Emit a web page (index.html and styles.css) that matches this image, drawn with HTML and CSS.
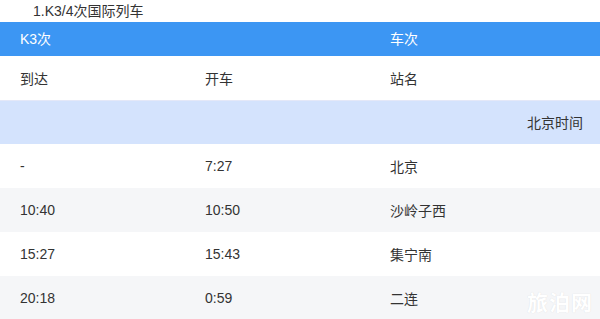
FILE: index.html
```html
<!DOCTYPE html>
<html lang="zh">
<head>
<meta charset="utf-8">
<link rel="stylesheet" href="styles.css">
</head>
<body>
<div class="page">
  <p class="title">1.K3/4次国际列车</p>
  <div class="table">
    <div class="row head">
      <div class="cell">K3次</div>
      <div class="cell"></div>
      <div class="cell">车次</div>
    </div>
    <div class="row">
      <div class="cell">到达</div>
      <div class="cell">开车</div>
      <div class="cell">站名</div>
    </div>
    <div class="row tz">
      <div class="cell span">北京时间</div>
    </div>
    <div class="row">
      <div class="cell">-</div>
      <div class="cell">7:27</div>
      <div class="cell">北京</div>
    </div>
    <div class="row alt">
      <div class="cell">10:40</div>
      <div class="cell">10:50</div>
      <div class="cell">沙岭子西</div>
    </div>
    <div class="row">
      <div class="cell">15:27</div>
      <div class="cell">15:43</div>
      <div class="cell">集宁南</div>
    </div>
    <div class="row alt">
      <div class="cell">20:18</div>
      <div class="cell">0:59</div>
      <div class="cell">二连</div>
    </div>
  </div>
  <div class="watermark">旅泊网</div>
</div>
</body>
</html>
```
FILE: styles.css
```css
* { box-sizing: border-box; }
html, body { margin: 0; padding: 0; background: #fff; }
body {
  font-family: "Microsoft YaHei", "Liberation Sans", "Noto Sans CJK SC", sans-serif;
  font-size: 14px;
  color: #333;
  width: 600px;
  height: 319px;
  overflow: hidden;
}
.page { position: relative; width: 600px; height: 319px; }
.title {
  margin: 0;
  height: 22px;
  line-height: 22px;
  padding-left: 33px;
  font-size: 14px;
  color: #333;
}
.table { display: flex; flex-direction: column; }
.row {
  display: grid;
  grid-template-columns: 185px 185px 1fr;
  height: 44px;
  align-items: center;
  background: #fff;
}
.cell { padding-left: 20px; padding-bottom: 1px; white-space: nowrap; }
.row.head {
  height: 34px;
  background: #3c96f3;
  color: #fff;
}
.row.head .cell { padding-bottom: 3px; }
.row.tz {
  height: 44px;
  background: #d4e3fd;
  border-top: 1px solid #e4e8f8;
  grid-template-columns: 1fr;
}
.cell.span { text-align: right; padding-right: 17px; }
.row.alt { background: #f5f6f8; }
.watermark {
  position: absolute;
  right: 7px;
  bottom: 3px;
  font-size: 21px;
  font-weight: bold;
  color: #fff;
  text-shadow: 0 0 1px rgba(0,0,0,0.12);
  letter-spacing: 1px;
}
```
